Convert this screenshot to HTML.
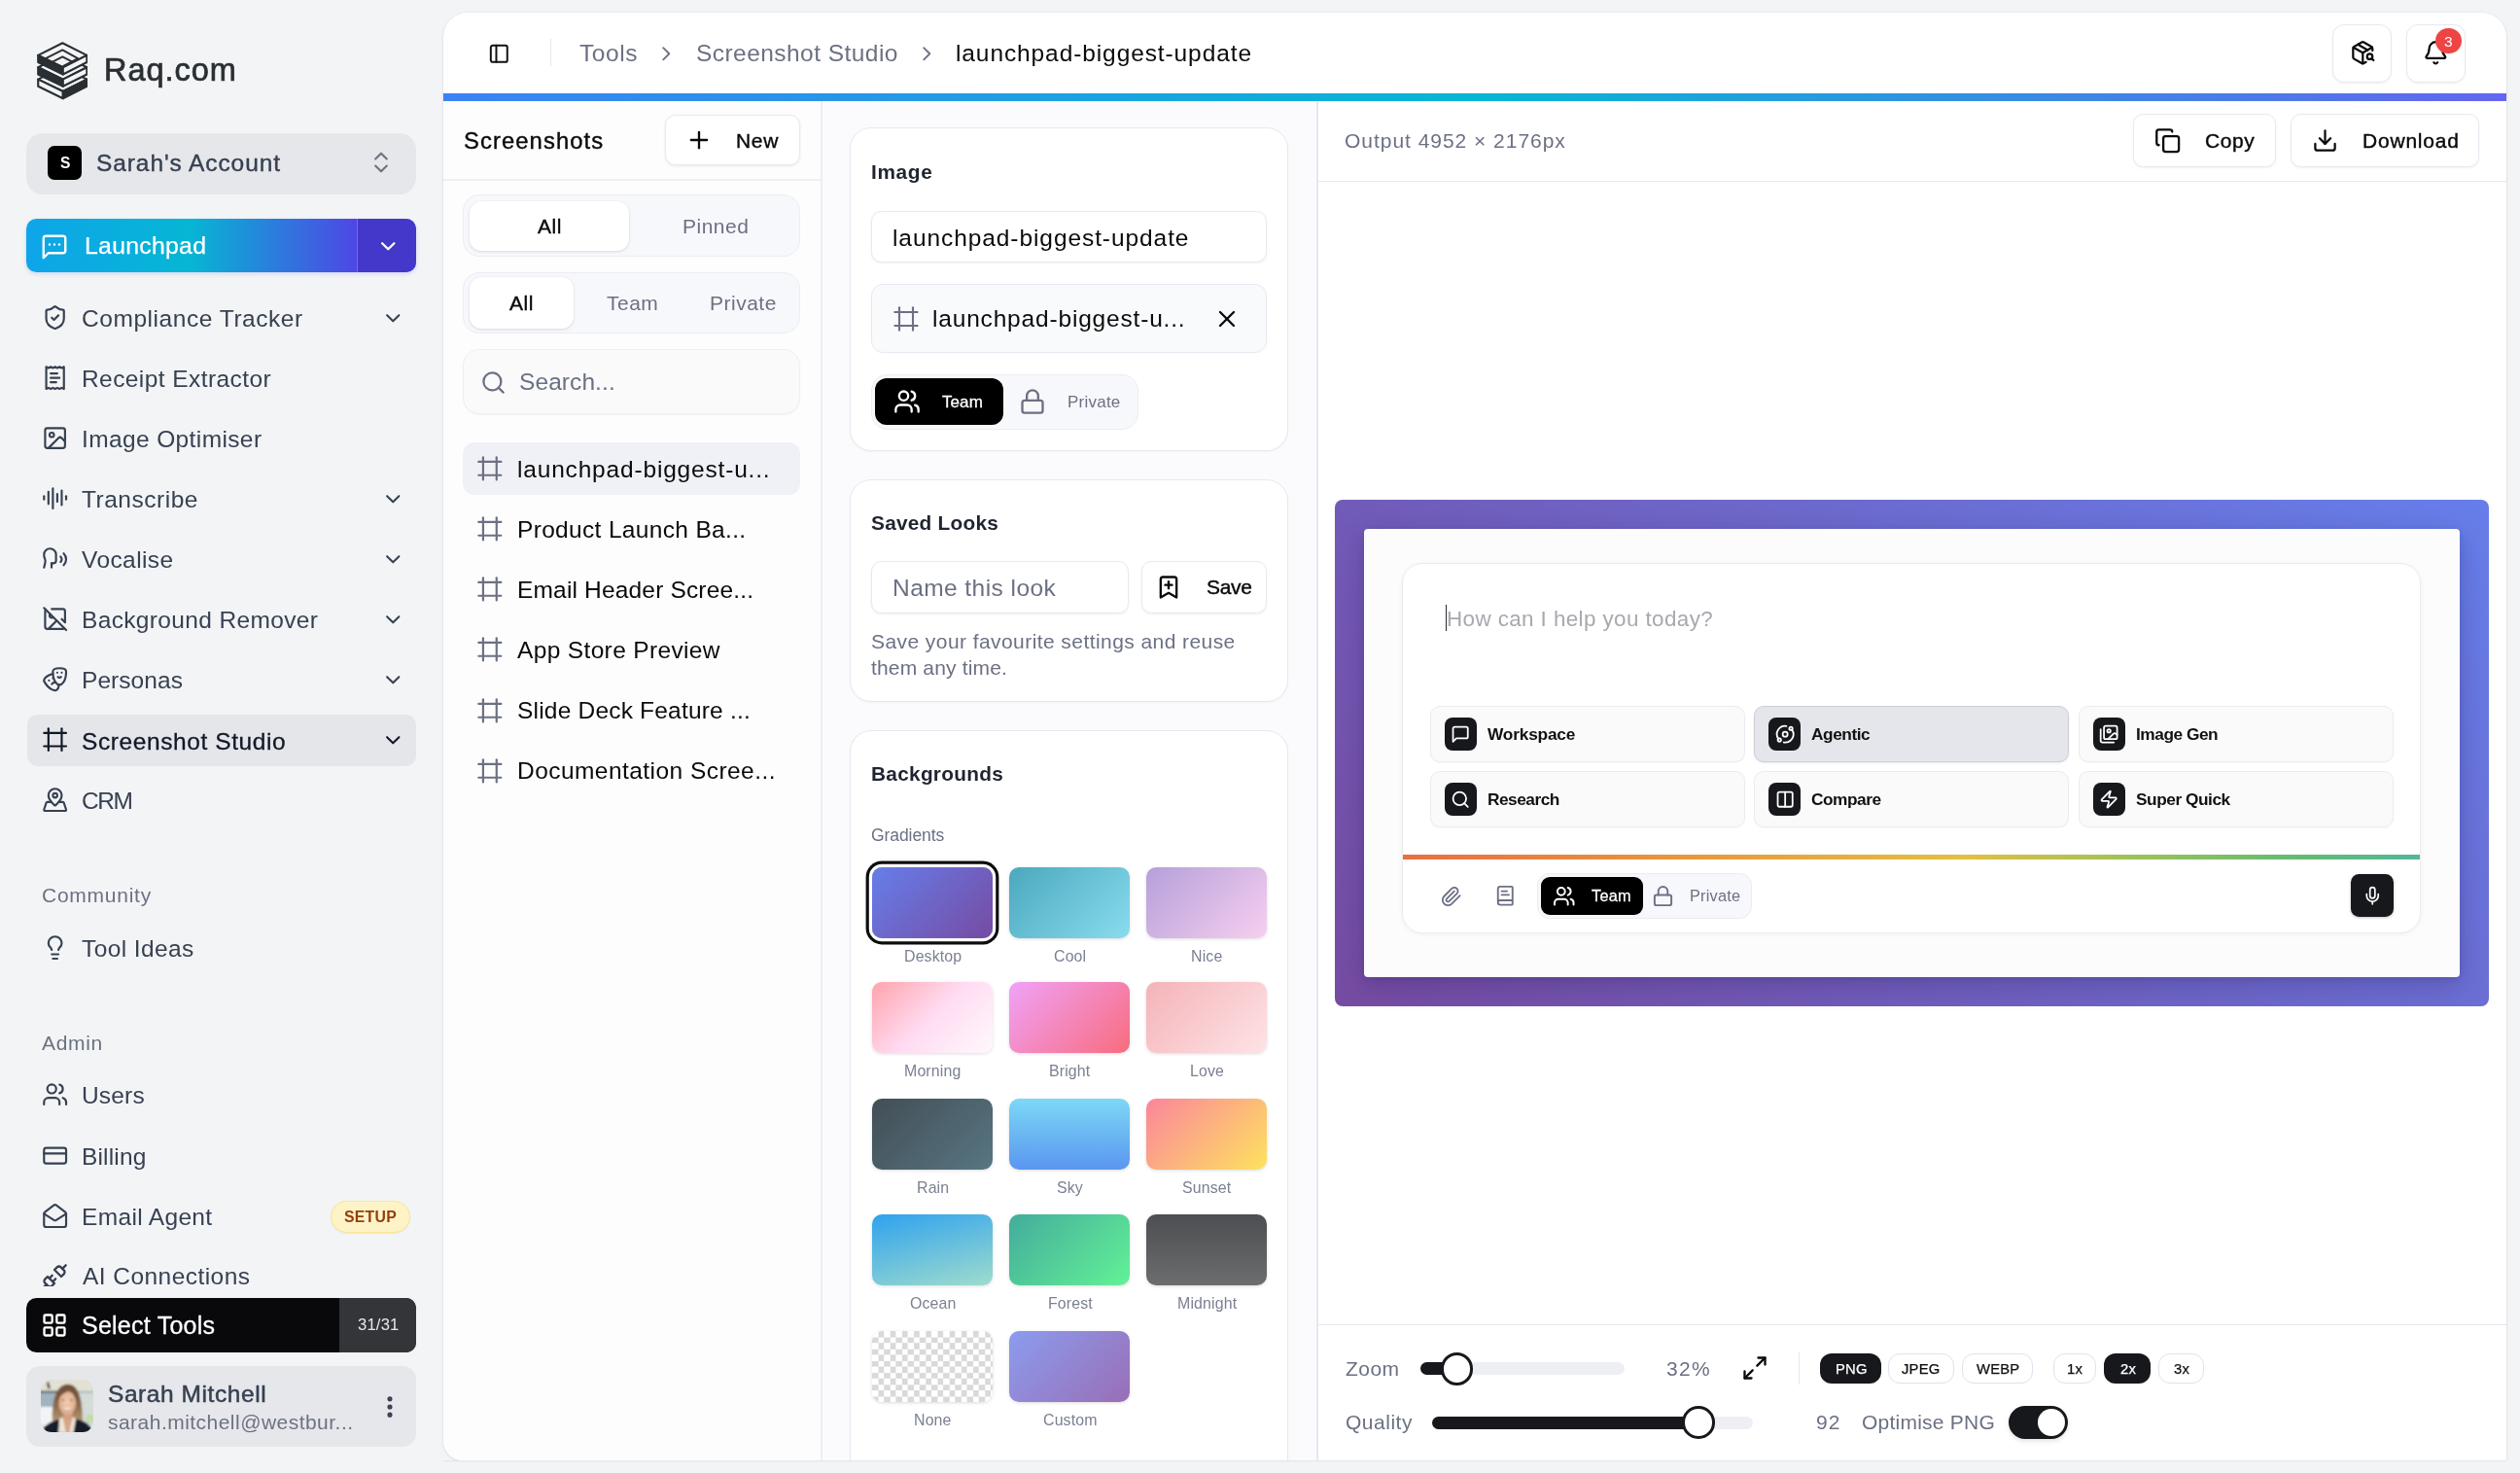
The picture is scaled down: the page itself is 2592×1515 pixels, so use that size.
<!DOCTYPE html>
<html lang="en"><head><meta charset="utf-8"><title>Screenshot Studio</title>
<style>
html,body{margin:0;padding:0;}
body{width:2592px;height:1515px;overflow:hidden;background:#f3f4f6;font-family:"Liberation Sans",sans-serif;position:relative;}
.a{position:absolute;box-sizing:border-box;}
.t{position:absolute;white-space:nowrap;will-change:transform;}
.ic{fill:none;stroke:currentColor;stroke-linecap:round;stroke-linejoin:round;overflow:visible;}
</style></head>
<body>
<svg width="0" height="0" style="position:absolute"><defs><g id="i-shield-check"><path d="M20 13c0 5-3.5 7.5-7.66 8.95a1 1 0 0 1-.67-.01C7.5 20.5 4 18 4 13V6a1 1 0 0 1 1-1c2 0 4.5-1.2 6.24-2.72a1.17 1.17 0 0 1 1.52 0C14.51 3.81 17 5 19 5a1 1 0 0 1 1 1z"/><path d="m9 12 2 2 4-4"/></g><g id="i-receipt-text"><path d="M4 2v20l2-1 2 1 2-1 2 1 2-1 2 1 2-1 2 1V2l-2 1-2-1-2 1-2-1-2 1-2-1-2 1Z"/><path d="M14 8H8"/><path d="M16 12H8"/><path d="M13 16H8"/></g><g id="i-image"><rect width="18" height="18" x="3" y="3" rx="2" ry="2"/><circle cx="9" cy="9" r="2"/><path d="m21 15-3.086-3.086a2 2 0 0 0-2.828 0L6 21"/></g><g id="i-audio-lines"><path d="M2 10v3"/><path d="M6 6v11"/><path d="M10 3v18"/><path d="M14 8v7"/><path d="M18 5v13"/><path d="M22 10v3"/></g><g id="i-speech"><path d="M8.8 20v-4.1l1.9.2a2.3 2.3 0 0 0 2.164-2.1V8.3A5.37 5.37 0 0 0 2 8.25c0 2.8.656 3.054 1 4.55a5.77 5.77 0 0 1 .029 2.758L2 20"/><path d="M19.8 17.8a7.5 7.5 0 0 0 .003-10.603"/><path d="M17 15a3.5 3.5 0 0 0-.025-4.975"/></g><g id="i-image-off"><line x1="2" x2="22" y1="2" y2="22"/><path d="M10.41 10.41a2 2 0 1 1-2.83-2.83"/><line x1="13.5" x2="6" y1="13.5" y2="21"/><line x1="18" x2="21" y1="12" y2="15"/><path d="M3.59 3.59A1.99 1.99 0 0 0 3 5v14a2 2 0 0 0 2 2h14c.55 0 1.052-.22 1.41-.59"/><path d="M21 15V5a2 2 0 0 0-2-2H9"/></g><g id="i-drama"><path d="M10 11h.01"/><path d="M14 6h.01"/><path d="M18 6h.01"/><path d="M6.5 13.1h.01"/><path d="M22 5c0 9-4 12-6 12s-6-3-6-12c0-2 2-3 6-3s6 1 6 3"/><path d="M17.4 9.9c-.8.8-2 .8-2.8 0"/><path d="M10.1 7.1C9 7.2 7.7 7.7 6 8.6c-3.5 2-4.7 3.9-3.7 5.6 4.5 7.8 9.5 8.4 11.2 7.4.9-.5 1.9-2.1 1.9-4.7"/><path d="M9.1 16.5c.3-1.1 1.4-1.7 2.4-1.4"/></g><g id="i-frame"><line x1="22" x2="2" y1="6" y2="6"/><line x1="22" x2="2" y1="18" y2="18"/><line x1="6" x2="6" y1="2" y2="22"/><line x1="18" x2="18" y1="2" y2="22"/></g><g id="i-map-pinned"><path d="M18 8c0 3.613-3.869 7.429-5.393 8.795a1 1 0 0 1-1.214 0C9.87 15.429 6 11.613 6 8a6 6 0 0 1 12 0"/><circle cx="12" cy="8" r="2"/><path d="M8.714 14h-3.71a1 1 0 0 0-.948.683l-2.004 6A1 1 0 0 0 3 22h18a1 1 0 0 0 .948-1.316l-2-6a1 1 0 0 0-.949-.684h-3.712"/></g><g id="i-lightbulb"><path d="M15 14c.2-1 .7-1.7 1.5-2.5 1-.9 1.5-2.2 1.5-3.5A6 6 0 0 0 6 8c0 1 .2 2.2 1.5 3.5.7.7 1.3 1.5 1.5 2.5"/><path d="M9 18h6"/><path d="M10 22h4"/></g><g id="i-users"><path d="M16 21v-2a4 4 0 0 0-4-4H6a4 4 0 0 0-4 4v2"/><circle cx="9" cy="7" r="4"/><path d="M22 21v-2a4 4 0 0 0-3-3.87"/><path d="M16 3.13a4 4 0 0 1 0 7.75"/></g><g id="i-credit-card"><rect width="20" height="14" x="2" y="5" rx="2"/><line x1="2" x2="22" y1="10" y2="10"/></g><g id="i-mail-open"><path d="M21.2 8.4c.5.38.8.97.8 1.6v10a2 2 0 0 1-2 2H4a2 2 0 0 1-2-2V10a2 2 0 0 1 .8-1.6l8-6a2 2 0 0 1 2.4 0l8 6Z"/><path d="m22 10-8.97 5.7a1.94 1.94 0 0 1-2.06 0L2 10"/></g><g id="i-unplug"><path d="m19 5 3-3"/><path d="m2 22 3-3"/><path d="M6.3 20.3a2.4 2.4 0 0 0 3.4 0L12 18l-6-6-2.3 2.3a2.4 2.4 0 0 0 0 3.4Z"/><path d="M7.5 13.5 10 11"/><path d="M10.5 16.5 13 14"/><path d="m12 6 6 6 2.3-2.3a2.4 2.4 0 0 0 0-3.4l-2.6-2.6a2.4 2.4 0 0 0-3.4 0Z"/></g><g id="i-layout-grid"><rect width="7" height="7" x="3" y="3" rx="1"/><rect width="7" height="7" x="14" y="3" rx="1"/><rect width="7" height="7" x="14" y="14" rx="1"/><rect width="7" height="7" x="3" y="14" rx="1"/></g><g id="i-ellipsis-vertical"><circle cx="12" cy="12" r="1"/><circle cx="12" cy="5" r="1"/><circle cx="12" cy="19" r="1"/></g><g id="i-chevron-down"><path d="m6 9 6 6 6-6"/></g><g id="i-chevron-right"><path d="m9 18 6-6-6-6"/></g><g id="i-chevrons-up-down"><path d="m7 15 5 5 5-5"/><path d="m7 9 5-5 5 5"/></g><g id="i-message-square-more"><path d="M21 15a2 2 0 0 1-2 2H7l-4 4V5a2 2 0 0 1 2-2h14a2 2 0 0 1 2 2z"/><path d="M8 10h.01"/><path d="M12 10h.01"/><path d="M16 10h.01"/></g><g id="i-message-square"><path d="M21 15a2 2 0 0 1-2 2H7l-4 4V5a2 2 0 0 1 2-2h14a2 2 0 0 1 2 2z"/></g><g id="i-panel-left"><rect width="18" height="18" x="3" y="3" rx="2"/><path d="M9 3v18"/></g><g id="i-package-search"><path d="M21 10V8a2 2 0 0 0-1-1.73l-7-4a2 2 0 0 0-2 0l-7 4A2 2 0 0 0 3 8v8a2 2 0 0 0 1 1.73l7 4a2 2 0 0 0 2 0l2-1.14"/><path d="m7.5 4.27 9 5.15"/><polyline points="3.29 7 12 12 20.71 7"/><line x1="12" x2="12" y1="22" y2="12"/><circle cx="18.5" cy="15.5" r="2.5"/><path d="M20.27 17.27 22 19"/></g><g id="i-bell"><path d="M10.268 21a2 2 0 0 0 3.464 0"/><path d="M3.262 15.326A1 1 0 0 0 4 17h16a1 1 0 0 0 .74-1.673C19.41 13.956 18 12.499 18 8A6 6 0 0 0 6 8c0 4.499-1.411 5.956-2.738 7.326"/></g><g id="i-plus"><path d="M5 12h14"/><path d="M12 5v14"/></g><g id="i-search"><circle cx="11" cy="11" r="8"/><path d="m21 21-4.3-4.3"/></g><g id="i-x"><path d="M18 6 6 18"/><path d="m6 6 12 12"/></g><g id="i-lock"><rect width="18" height="11" x="3" y="11" rx="2" ry="2"/><path d="M7 11V7a5 5 0 0 1 10 0v4"/></g><g id="i-bookmark-plus"><path d="m19 21-7-4-7 4V5a2 2 0 0 1 2-2h10a2 2 0 0 1 2 2v16z"/><line x1="12" x2="12" y1="7" y2="13"/><line x1="15" x2="9" y1="10" y2="10"/></g><g id="i-copy"><rect width="14" height="14" x="8" y="8" rx="2" ry="2"/><path d="M4 16c-1.1 0-2-.9-2-2V4c0-1.1.9-2 2-2h10c1.1 0 2 .9 2 2"/></g><g id="i-download"><path d="M21 15v4a2 2 0 0 1-2 2H5a2 2 0 0 1-2-2v-4"/><polyline points="7 10 12 15 17 10"/><line x1="12" x2="12" y1="15" y2="3"/></g><g id="i-maximize-2"><polyline points="15 3 21 3 21 9"/><polyline points="9 21 3 21 3 15"/><line x1="21" x2="14" y1="3" y2="10"/><line x1="3" x2="10" y1="21" y2="14"/></g><g id="i-orbit"><circle cx="12" cy="12" r="3"/><circle cx="19" cy="5" r="2"/><circle cx="5" cy="19" r="2"/><path d="M10.4 21.9a10 10 0 0 0 9.941-15.416"/><path d="M13.5 2.1a10 10 0 0 0-9.841 15.416"/></g><g id="i-images"><path d="M18 22H4a2 2 0 0 1-2-2V6"/><path d="m22 13-1.296-1.296a2.41 2.41 0 0 0-3.408 0L11 18"/><circle cx="12" cy="8" r="2"/><rect width="16" height="16" x="6" y="2" rx="2"/></g><g id="i-columns-2"><rect width="18" height="18" x="3" y="3" rx="2"/><path d="M12 3v18"/></g><g id="i-zap"><path d="M4 14a1 1 0 0 1-.78-1.63l9.9-10.2a.5.5 0 0 1 .86.46l-1.92 6.02A1 1 0 0 0 13 10h7a1 1 0 0 1 .78 1.63l-9.9 10.2a.5.5 0 0 1-.86-.46l1.92-6.02A1 1 0 0 0 11 14z"/></g><g id="i-paperclip"><path d="m21.44 11.05-9.19 9.19a6 6 0 0 1-8.49-8.49l8.57-8.57A4 4 0 1 1 18 8.84l-8.59 8.57a2 2 0 0 1-2.83-2.83l8.49-8.48"/></g><g id="i-book-text"><path d="M4 19.5v-15A2.5 2.5 0 0 1 6.5 2H19a1 1 0 0 1 1 1v18a1 1 0 0 1-1 1H6.5a1 1 0 0 1 0-5H20"/><path d="M8 11h8"/><path d="M8 7h6"/></g><g id="i-mic"><path d="M12 2a3 3 0 0 0-3 3v7a3 3 0 0 0 6 0V5a3 3 0 0 0-3-3Z"/><path d="M19 10v2a7 7 0 0 1-14 0v-2"/><line x1="12" x2="12" y1="19" y2="22"/></g></defs></svg>
<svg class="a" style="left:37.5px;top:42.5px;width:52.6px;height:60.2px" viewBox="130 120 1080 1215" preserveAspectRatio="none"><g stroke="#2a2f33" stroke-width="44" stroke-linejoin="round" stroke-linecap="round"><polygon points="155,900 670,645 1185,900 680,1150" fill="#f3f4f6"/><polygon points="155,900 680,1150 680,1295 155,1045" fill="#f3f4f6"/><polygon points="680,1150 1185,900 1185,1045 680,1295" fill="#2a2f33"/><polygon points="155,650 670,395 1185,650 680,900" fill="#f3f4f6"/><polygon points="155,650 680,900 680,1045 155,795" fill="#2a2f33"/><polygon points="680,900 1185,650 1185,795 680,1045" fill="#f3f4f6"/><polygon points="155,400 670,145 1185,400 680,650" fill="#f3f4f6"/><polygon points="155,400 680,650 680,795 155,545" fill="#2a2f33"/><polygon points="680,650 1185,400 1185,545 680,795" fill="#f3f4f6"/><polyline points="304,471 670,290 995,465 690,620" fill="none" stroke-width="40"/><polyline points="448,540 670,430 860,528" fill="none" stroke-width="40"/></g></svg>
<div class="t" style="left:107.2px;top:55.6px;font-size:32.5px;line-height:32.5px;color:#2a2f33;letter-spacing:0.96px;-webkit-text-stroke:0.7px #2a2f33;">Raq.com</div>
<div class="a" style="left:27.0px;top:137.0px;width:400.5px;height:62.5px;border-radius:17px;background:#e6e7eb;"></div>
<div class="a" style="left:49.4px;top:150.0px;width:34.6px;height:34.6px;border-radius:7px;background:#000;"></div>
<div class="t" style="left:61.5px;top:160.0px;font-size:15.6px;line-height:15.6px;color:#fff;font-weight:700;">S</div>
<div class="t" style="left:99.0px;top:156.0px;font-size:24.5px;line-height:24.5px;color:#374151;letter-spacing:0.91px;-webkit-text-stroke:0.4px #374151;">Sarah's Account</div>
<svg class="a ic" style="left:377.5px;top:153.3px;width:28px;height:28px;color:#6b7280;" viewBox="0 0 24 24" stroke-width="1.8"><use href="#i-chevrons-up-down"/></svg>
<div class="a" style="left:27.0px;top:225.0px;width:400.5px;height:55.0px;border-radius:10.5px;background:linear-gradient(90deg,#0ea5e9 0%,#06b6d4 42%,#4f46e5 85%,#4f46e5 100%);box-shadow:0 2px 4px rgba(50,70,190,.16);overflow:hidden;"><div class="a" style="left:340px;top:0;width:61px;height:55px;background:#4338ca;border-left:1.75px solid rgba(255,255,255,.28)"></div></div>
<svg class="a ic" style="left:40.7px;top:239.3px;width:30px;height:30px;color:#fff;" viewBox="0 0 24 24" stroke-width="1.9"><use href="#i-message-square-more"/></svg>
<div class="t" style="left:87.0px;top:241.3px;font-size:24.8px;line-height:24.8px;color:#fff;letter-spacing:0.28px;-webkit-text-stroke:0.25px #fff;">Launchpad</div>
<svg class="a ic" style="left:386.8px;top:240.8px;width:24.5px;height:24.5px;color:#fff;" viewBox="0 0 24 24" stroke-width="2.2"><use href="#i-chevron-down"/></svg>
<div class="a" style="left:27.5px;top:735.2px;width:400.0px;height:52.5px;border-radius:10.5px;background:#e5e6ea;"></div>
<svg class="a ic" style="left:42.8px;top:313.1px;width:27.3px;height:27.3px;color:#374151;" viewBox="0 0 24 24" stroke-width="1.9"><use href="#i-shield-check"/></svg>
<div class="t" style="left:84.3px;top:316.3px;font-size:24.5px;line-height:24.5px;color:#374151;letter-spacing:0.55px;">Compliance Tracker</div>
<svg class="a ic" style="left:392.1px;top:315.2px;width:24.5px;height:24.5px;color:#374151;" viewBox="0 0 24 24" stroke-width="2"><use href="#i-chevron-down"/></svg>
<svg class="a ic" style="left:42.8px;top:374.9px;width:27.3px;height:27.3px;color:#374151;" viewBox="0 0 24 24" stroke-width="1.9"><use href="#i-receipt-text"/></svg>
<div class="t" style="left:84.3px;top:378.1px;font-size:24.5px;line-height:24.5px;color:#374151;letter-spacing:0.42px;">Receipt Extractor</div>
<svg class="a ic" style="left:42.8px;top:436.8px;width:27.3px;height:27.3px;color:#374151;" viewBox="0 0 24 24" stroke-width="1.9"><use href="#i-image"/></svg>
<div class="t" style="left:84.3px;top:440.0px;font-size:24.5px;line-height:24.5px;color:#374151;letter-spacing:0.38px;">Image Optimiser</div>
<svg class="a ic" style="left:42.8px;top:498.8px;width:27.3px;height:27.3px;color:#374151;" viewBox="0 0 24 24" stroke-width="1.9"><use href="#i-audio-lines"/></svg>
<div class="t" style="left:84.3px;top:502.0px;font-size:24.5px;line-height:24.5px;color:#374151;letter-spacing:0.51px;">Transcribe</div>
<svg class="a ic" style="left:392.1px;top:501.0px;width:24.5px;height:24.5px;color:#374151;" viewBox="0 0 24 24" stroke-width="2"><use href="#i-chevron-down"/></svg>
<svg class="a ic" style="left:42.8px;top:560.6px;width:27.3px;height:27.3px;color:#374151;" viewBox="0 0 24 24" stroke-width="1.9"><use href="#i-speech"/></svg>
<div class="t" style="left:84.3px;top:563.8px;font-size:24.5px;line-height:24.5px;color:#374151;letter-spacing:0.41px;">Vocalise</div>
<svg class="a ic" style="left:392.1px;top:562.8px;width:24.5px;height:24.5px;color:#374151;" viewBox="0 0 24 24" stroke-width="2"><use href="#i-chevron-down"/></svg>
<svg class="a ic" style="left:42.8px;top:622.6px;width:27.3px;height:27.3px;color:#374151;" viewBox="0 0 24 24" stroke-width="1.9"><use href="#i-image-off"/></svg>
<div class="t" style="left:84.3px;top:625.8px;font-size:24.5px;line-height:24.5px;color:#374151;letter-spacing:0.35px;">Background Remover</div>
<svg class="a ic" style="left:392.1px;top:624.8px;width:24.5px;height:24.5px;color:#374151;" viewBox="0 0 24 24" stroke-width="2"><use href="#i-chevron-down"/></svg>
<svg class="a ic" style="left:42.8px;top:684.9px;width:27.3px;height:27.3px;color:#374151;" viewBox="0 0 24 24" stroke-width="1.9"><use href="#i-drama"/></svg>
<div class="t" style="left:84.3px;top:688.1px;font-size:24.5px;line-height:24.5px;color:#374151;letter-spacing:0.06px;">Personas</div>
<svg class="a ic" style="left:392.1px;top:687.0px;width:24.5px;height:24.5px;color:#374151;" viewBox="0 0 24 24" stroke-width="2"><use href="#i-chevron-down"/></svg>
<svg class="a ic" style="left:42.8px;top:747.0px;width:27.3px;height:27.3px;color:#111827;" viewBox="0 0 24 24" stroke-width="1.9"><use href="#i-frame"/></svg>
<div class="t" style="left:84.3px;top:750.6px;font-size:24.5px;line-height:24.5px;color:#111827;letter-spacing:0.59px;-webkit-text-stroke:0.3px #111827;">Screenshot Studio</div>
<svg class="a ic" style="left:392.1px;top:749.1px;width:24.5px;height:24.5px;color:#111827;" viewBox="0 0 24 24" stroke-width="2"><use href="#i-chevron-down"/></svg>
<svg class="a ic" style="left:42.8px;top:809.1px;width:27.3px;height:27.3px;color:#374151;" viewBox="0 0 24 24" stroke-width="1.9"><use href="#i-map-pinned"/></svg>
<div class="t" style="left:84.3px;top:812.3px;font-size:24.5px;line-height:24.5px;color:#374151;letter-spacing:-1.50px;">CRM</div>
<svg class="a ic" style="left:42.8px;top:960.6px;width:27.3px;height:27.3px;color:#374151;" viewBox="0 0 24 24" stroke-width="1.9"><use href="#i-lightbulb"/></svg>
<div class="t" style="left:84.3px;top:963.8px;font-size:24.5px;line-height:24.5px;color:#374151;letter-spacing:0.40px;">Tool Ideas</div>
<svg class="a ic" style="left:42.8px;top:1112.0px;width:27.3px;height:27.3px;color:#374151;" viewBox="0 0 24 24" stroke-width="1.9"><use href="#i-users"/></svg>
<div class="t" style="left:84.3px;top:1115.3px;font-size:24.5px;line-height:24.5px;color:#374151;letter-spacing:0.18px;">Users</div>
<svg class="a ic" style="left:42.8px;top:1174.8px;width:27.3px;height:27.3px;color:#374151;" viewBox="0 0 24 24" stroke-width="1.9"><use href="#i-credit-card"/></svg>
<div class="t" style="left:84.3px;top:1178.1px;font-size:24.5px;line-height:24.5px;color:#374151;letter-spacing:0.16px;">Billing</div>
<svg class="a ic" style="left:42.8px;top:1237.0px;width:27.3px;height:27.3px;color:#374151;" viewBox="0 0 24 24" stroke-width="1.9"><use href="#i-mail-open"/></svg>
<div class="t" style="left:84.3px;top:1240.3px;font-size:24.5px;line-height:24.5px;color:#374151;letter-spacing:0.34px;">Email Agent</div>
<div class="t" style="left:42.6px;top:910.4px;font-size:21px;line-height:21px;color:#6b7280;letter-spacing:0.75px;">Community</div>
<div class="t" style="left:42.6px;top:1062.0px;font-size:21px;line-height:21px;color:#6b7280;letter-spacing:0.67px;">Admin</div>
<div class="a" style="left:339.7px;top:1234.5px;width:82.5px;height:33.6px;border-radius:17px;background:#fef3c7;border:1.75px solid #fde68a;box-shadow:0 1px 2px rgba(0,0,0,.05);"></div>
<div class="t" style="left:354.3px;top:1243.8px;font-size:15.8px;line-height:15.8px;color:#92400e;font-weight:700;letter-spacing:0.25px;">SETUP</div>
<div class="a" style="left:0;top:1290px;width:440px;height:32.8px;overflow:hidden">
<svg class="a ic" style="left:42px;top:8.5px;width:28px;height:28px;color:#374151" viewBox="0 0 24 24" stroke-width="2"><use href="#i-unplug"/></svg>
</div>
<div class="t" style="left:84.5px;top:1300.5px;font-size:24.5px;line-height:24.5px;color:#374151;letter-spacing:0.45px;">AI Connections</div>
<div class="a" style="left:27.0px;top:1335.0px;width:400.5px;height:55.5px;border-radius:10.5px;background:#09090b;overflow:hidden;"><div class="a" style="left:322px;top:0;width:79px;height:56px;background:#333539"></div></div>
<svg class="a ic" style="left:41.7px;top:1348.7px;width:28px;height:28px;color:#fff;" viewBox="0 0 24 24" stroke-width="2"><use href="#i-layout-grid"/></svg>
<div class="t" style="left:84.0px;top:1350.5px;font-size:25px;line-height:25px;color:#fff;letter-spacing:0.24px;-webkit-text-stroke:0.3px #fff;">Select Tools</div>
<div class="t" style="left:367.5px;top:1355.1px;font-size:16.6px;line-height:16.6px;color:#e5e7eb;letter-spacing:0.2px;">31/31</div>
<div class="a" style="left:27.0px;top:1404.5px;width:400.5px;height:83.0px;border-radius:14px;background:#e6e7eb;"></div>
<svg class="a" style="left:42px;top:1419px;width:54px;height:54px;border-radius:11px" viewBox="0 0 54 54">
<defs><filter id="avb" x="-10%" y="-10%" width="120%" height="120%"><feGaussianBlur stdDeviation="1.0"/></filter>
<linearGradient id="avh" x1="0" y1="0" x2="0" y2="1"><stop offset="0" stop-color="#6b4c35"/><stop offset=".55" stop-color="#8a6a4b"/><stop offset="1" stop-color="#b59673"/></linearGradient>
<radialGradient id="avf" cx=".5" cy=".45" r=".6"><stop offset="0" stop-color="#f3cdb3"/><stop offset="1" stop-color="#dba688"/></radialGradient></defs>
<rect width="54" height="54" fill="#dfe3df"/>
<g filter="url(#avb)">
<rect x="-2" y="-2" width="58" height="15" fill="#e3e0d4"/>
<rect x="-2" y="12.500" width="20" height="16" fill="#9fb4be"/>
<rect x="-2" y="11.500" width="20" height="2.200" fill="#5d6a6c"/>
<rect x="-2" y="28" width="20" height="18" fill="#f1f4f7"/>
<rect x="36" y="11" width="20" height="36" fill="#d4dcd8"/>
<rect x="38" y="12" width="16" height="1.600" fill="#aab6b0"/>
<ellipse cx="50.500" cy="40" rx="4" ry="4.500" fill="#c2dba8"/>
<rect x="6.500" y="2.500" width="2.600" height="7" rx="1" fill="#45433f" transform="rotate(-14 8 6)"/>
<path d="M12 43C11 30 13 5 27.500 4.800C42 5 42.500 28 43 42C40 43 37 42 36 40L19 40C18 42 15 43 12 43z" fill="url(#avh)"/>
<path d="M23 34h9.500v10h-9.500z" fill="#d2a080"/>
<ellipse cx="27.300" cy="24.200" rx="8.900" ry="12.200" fill="url(#avf)"/>
<path d="M17.500 22C17 12 21 8.500 27.500 8.500S38 12 37.200 22C35.500 16 32 12.500 29 12C25 12.500 19.500 16 17.500 22z" fill="#74533a"/>
<ellipse cx="22.800" cy="21" rx="1.800" ry=".8" fill="#6b4a3a" opacity=".75"/><ellipse cx="31.300" cy="21" rx="1.800" ry=".8" fill="#6b4a3a" opacity=".75"/>
<path d="M22.800 28.800C25 31.800 29.500 31.800 31.800 28.800C30 32.600 24.600 32.600 22.800 28.800z" fill="#c27f74"/>
<path d="M23.600 29.200C25.500 30.800 29 30.800 31 29.200C29.500 30 25 30 23.600 29.200z" fill="#fff" stroke="#fff" stroke-width=".7"/>
<path d="M2 56C2 47 9 43.500 19 40.500L24 56zM52.500 56C53 46 46 43 36 40.200L30 56z" fill="#141a2b"/>
<path d="M19 40.500L22.500 38.500L26 54.500L18 55zM36 40.200L32.800 38.300L29.500 54.500L33.500 55z" fill="#efe5d8"/>
<path d="M23.200 41L32 41L29.200 55L25.800 55z" fill="#d7a686"/>
</g></svg>
<div class="t" style="left:111.3px;top:1421.5px;font-size:24.5px;line-height:24.5px;color:#374151;letter-spacing:0.57px;-webkit-text-stroke:0.5px #374151;">Sarah Mitchell</div>
<div class="t" style="left:111.0px;top:1451.7px;font-size:21px;line-height:21px;color:#6b7280;letter-spacing:0.47px;">sarah.mitchell@westbur...</div>
<svg class="a ic" style="left:386.6px;top:1432.5px;width:28px;height:28px;color:#374151;" viewBox="0 0 24 24" stroke-width="2.4"><use href="#i-ellipsis-vertical"/></svg>
<div class="a" style="left:456px;top:13px;width:2122px;height:1489px;background:#fff;border-radius:25px 25px 0 20px;box-shadow:0 1px 3px rgba(0,0,0,.10),0 0 0 1px rgba(0,0,0,.02);overflow:hidden">
<div class="a" style="left:0;top:90px;width:389px;height:1400px;background:#fdfdfe"></div>
<div class="a" style="left:389px;top:90px;width:510px;height:1400px;background:#fbfbfd"></div>
</div>
<svg class="a ic" style="left:502.3px;top:43.5px;width:22.6px;height:22.6px;color:#111;" viewBox="0 0 24 24" stroke-width="2.1"><use href="#i-panel-left"/></svg>
<div class="a" style="left:565.5px;top:40.0px;width:1.8px;height:27.5px;background:#e5e7eb;"></div>
<div class="t" style="left:596.0px;top:42.8px;font-size:24.5px;line-height:24.5px;color:#6c7084;letter-spacing:0.55px;">Tools</div>
<svg class="a ic" style="left:673.2px;top:42.8px;width:24.5px;height:24.5px;color:#6c7084;" viewBox="0 0 24 24" stroke-width="1.8"><use href="#i-chevron-right"/></svg>
<div class="t" style="left:715.6px;top:42.8px;font-size:24.5px;line-height:24.5px;color:#6c7084;letter-spacing:0.45px;">Screenshot Studio</div>
<svg class="a ic" style="left:941.2px;top:42.8px;width:24.5px;height:24.5px;color:#6c7084;" viewBox="0 0 24 24" stroke-width="1.8"><use href="#i-chevron-right"/></svg>
<div class="t" style="left:983.0px;top:42.8px;font-size:24.5px;line-height:24.5px;color:#0a0a0a;letter-spacing:0.90px;">launchpad-biggest-update</div>
<div class="a" style="left:2399.0px;top:24.8px;width:61.0px;height:60.0px;border-radius:12px;border:1.75px solid #e8e9f0;background:#fff;box-shadow:0 1px 2.5px rgba(0,0,0,.06);"></div>
<svg class="a ic" style="left:2416.5px;top:40.7px;width:26.6px;height:26.6px;color:#0a0a0a;" viewBox="0 0 24 24" stroke-width="2"><use href="#i-package-search"/></svg>
<div class="a" style="left:2475.0px;top:24.8px;width:60.5px;height:60.0px;border-radius:12px;border:1.75px solid #e8e9f0;background:#fff;box-shadow:0 1px 2.5px rgba(0,0,0,.06);"></div>
<svg class="a ic" style="left:2491.9px;top:40.7px;width:26.6px;height:26.6px;color:#0a0a0a;" viewBox="0 0 24 24" stroke-width="2"><use href="#i-bell"/></svg>
<div class="a" style="left:2505.2px;top:28.9px;width:26.4px;height:26.4px;border-radius:50%;background:#ef4444;"></div>
<div class="t" style="left:2514.0px;top:34.7px;font-size:15.5px;line-height:15.5px;color:#fff;">3</div>
<div class="a" style="left:456.0px;top:95.5px;width:2122.0px;height:8.0px;background:linear-gradient(90deg,#3b82f6 0%,#06b6d4 50%,#6366f1 100%);"></div>
<div class="a" style="left:843.8px;top:103.5px;width:1.8px;height:1398.5px;background:#eceef3;"></div>
<div class="a" style="left:1354.3px;top:103.5px;width:1.8px;height:1398.5px;background:#e6e7ee;"></div>
<div class="a" style="left:456.0px;top:183.8px;width:388.0px;height:1.8px;background:#eef0f4;"></div>
<div class="t" style="left:476.5px;top:132.6px;font-size:23.8px;line-height:23.8px;color:#0a0a0a;letter-spacing:1.09px;-webkit-text-stroke:0.4px #0a0a0a;">Screenshots</div>
<div class="a" style="left:683.5px;top:117.8px;width:139.0px;height:52.4px;border-radius:10.5px;border:1.75px solid #e8e9f0;background:#fff;box-shadow:0 1px 3px rgba(0,0,0,.08);"></div>
<svg class="a ic" style="left:705.0px;top:130.0px;width:28px;height:28px;color:#0a0a0a;" viewBox="0 0 24 24" stroke-width="2"><use href="#i-plus"/></svg>
<div class="t" style="left:757.0px;top:133.9px;font-size:21px;line-height:21px;color:#0a0a0a;letter-spacing:0.69px;-webkit-text-stroke:0.4px #0a0a0a;">New</div>
<div class="a" style="left:476.4px;top:200.0px;width:346.6px;height:64.4px;border-radius:17px;background:#f7f8fb;border:1.75px solid #ecedf2;"></div>
<div class="a" style="left:482.5px;top:206.5px;width:164.5px;height:51.8px;border-radius:12px;background:#fff;box-shadow:0 1px 3px rgba(0,0,0,.12),0 0 1px rgba(0,0,0,.08);"></div>
<div class="t" style="left:553.1px;top:221.9px;font-size:21px;line-height:21px;color:#0a0a0a;-webkit-text-stroke:0.4px #0a0a0a;letter-spacing:0.5px;">All</div>
<div class="t" style="left:701.9px;top:221.9px;font-size:21px;line-height:21px;color:#6c7084;letter-spacing:0.5px;">Pinned</div>
<div class="a" style="left:476.4px;top:279.6px;width:346.6px;height:63.2px;border-radius:17px;background:#f7f8fb;border:1.75px solid #ecedf2;"></div>
<div class="a" style="left:482.5px;top:285.0px;width:107.5px;height:52.5px;border-radius:12px;background:#fff;box-shadow:0 1px 3px rgba(0,0,0,.12),0 0 1px rgba(0,0,0,.08);"></div>
<div class="t" style="left:524.3px;top:300.5px;font-size:21px;line-height:21px;color:#0a0a0a;-webkit-text-stroke:0.4px #0a0a0a;letter-spacing:0.5px;">All</div>
<div class="t" style="left:623.9px;top:300.5px;font-size:21px;line-height:21px;color:#6c7084;letter-spacing:0.5px;">Team</div>
<div class="t" style="left:730.3px;top:300.5px;font-size:21px;line-height:21px;color:#6c7084;letter-spacing:0.5px;">Private</div>
<div class="a" style="left:476.4px;top:359.0px;width:346.6px;height:67.2px;border-radius:17px;background:#fafafb;border:1.75px solid #eeeff3;box-shadow:0 1px 2px rgba(0,0,0,.04);"></div>
<svg class="a ic" style="left:493.7px;top:379.5px;width:27px;height:27px;color:#6c7084;" viewBox="0 0 24 24" stroke-width="2"><use href="#i-search"/></svg>
<div class="t" style="left:533.8px;top:381.3px;font-size:24.5px;line-height:24.5px;color:#6c7084;letter-spacing:0.08px;">Search...</div>
<div class="a" style="left:475.8px;top:455.0px;width:347.5px;height:54.4px;border-radius:12px;background:#f0f1f6;"></div>
<svg class="a ic" style="left:490.2px;top:467.9px;width:27.7px;height:27.7px;color:#6c7084;" viewBox="0 0 24 24" stroke-width="1.9"><use href="#i-frame"/></svg>
<div class="t" style="left:532.0px;top:470.6px;font-size:24.5px;line-height:24.5px;color:#0a0a0a;letter-spacing:0.82px;">launchpad-biggest-u...</div>
<svg class="a ic" style="left:490.2px;top:530.1px;width:27.7px;height:27.7px;color:#6c7084;" viewBox="0 0 24 24" stroke-width="1.9"><use href="#i-frame"/></svg>
<div class="t" style="left:532.0px;top:532.8px;font-size:24.5px;line-height:24.5px;color:#0a0a0a;letter-spacing:0.33px;">Product Launch Ba...</div>
<svg class="a ic" style="left:490.2px;top:592.2px;width:27.7px;height:27.7px;color:#6c7084;" viewBox="0 0 24 24" stroke-width="1.9"><use href="#i-frame"/></svg>
<div class="t" style="left:532.0px;top:594.9px;font-size:24.5px;line-height:24.5px;color:#0a0a0a;letter-spacing:0.17px;">Email Header Scree...</div>
<svg class="a ic" style="left:490.2px;top:654.4px;width:27.7px;height:27.7px;color:#6c7084;" viewBox="0 0 24 24" stroke-width="1.9"><use href="#i-frame"/></svg>
<div class="t" style="left:532.0px;top:657.1px;font-size:24.5px;line-height:24.5px;color:#0a0a0a;letter-spacing:0.35px;">App Store Preview</div>
<svg class="a ic" style="left:490.2px;top:716.6px;width:27.7px;height:27.7px;color:#6c7084;" viewBox="0 0 24 24" stroke-width="1.9"><use href="#i-frame"/></svg>
<div class="t" style="left:532.0px;top:719.2px;font-size:24.5px;line-height:24.5px;color:#0a0a0a;letter-spacing:0.20px;">Slide Deck Feature ...</div>
<svg class="a ic" style="left:490.2px;top:778.7px;width:27.7px;height:27.7px;color:#6c7084;" viewBox="0 0 24 24" stroke-width="1.9"><use href="#i-frame"/></svg>
<div class="t" style="left:532.0px;top:781.4px;font-size:24.5px;line-height:24.5px;color:#0a0a0a;letter-spacing:0.45px;">Documentation Scree...</div>
<div class="a" style="left:873.8px;top:131.2px;width:451.6px;height:333.2px;border-radius:22px;border:1.75px solid #e8e9f0;background:#fff;box-shadow:0 1px 2px rgba(0,0,0,.04);"></div>
<div class="t" style="left:895.8px;top:166.5px;font-size:20.8px;line-height:20.8px;color:#1f2430;letter-spacing:0.67px;font-weight:700;">Image</div>
<div class="a" style="left:895.8px;top:217.2px;width:407.0px;height:52.6px;border-radius:10.5px;border:1.75px solid #e8e9f0;background:#fff;box-shadow:0 1px 2.5px rgba(0,0,0,.06);"></div>
<div class="t" style="left:917.5px;top:233.0px;font-size:24.5px;line-height:24.5px;color:#0a0a0a;letter-spacing:0.92px;">launchpad-biggest-update</div>
<div class="a" style="left:895.8px;top:292.2px;width:407.0px;height:70.8px;border-radius:12px;border:1.75px solid #e8e9f0;background:#f9fafc;"></div>
<svg class="a ic" style="left:917.7px;top:313.7px;width:28px;height:28px;color:#6c7084;" viewBox="0 0 24 24" stroke-width="1.8"><use href="#i-frame"/></svg>
<div class="t" style="left:959.4px;top:315.7px;font-size:24.5px;line-height:24.5px;color:#0a0a0a;letter-spacing:0.82px;">launchpad-biggest-u...</div>
<svg class="a ic" style="left:1247.8px;top:313.7px;width:28px;height:28px;color:#0a0a0a;" viewBox="0 0 24 24" stroke-width="2"><use href="#i-x"/></svg>
<div class="a" style="left:896.3px;top:385.4px;width:274.7px;height:57.0px;border-radius:17px;background:#f7f8fb;border:1.75px solid #ecedf2;"></div>
<div class="a" style="left:899.8px;top:389.0px;width:132.2px;height:47.8px;border-radius:12px;background:#000;"></div>
<svg class="a ic" style="left:919.0px;top:399.0px;width:28px;height:28px;color:#fff;" viewBox="0 0 24 24" stroke-width="2"><use href="#i-users"/></svg>
<div class="t" style="left:969.2px;top:404.9px;font-size:17px;line-height:17px;color:#fff;letter-spacing:0.08px;-webkit-text-stroke:0.3px #fff;">Team</div>
<svg class="a ic" style="left:1048.4px;top:399.0px;width:28px;height:28px;color:#6c7084;" viewBox="0 0 24 24" stroke-width="2"><use href="#i-lock"/></svg>
<div class="t" style="left:1097.6px;top:404.9px;font-size:17px;line-height:17px;color:#6c7084;letter-spacing:0.23px;">Private</div>
<div class="a" style="left:873.8px;top:493.0px;width:451.6px;height:228.8px;border-radius:22px;border:1.75px solid #e8e9f0;background:#fff;box-shadow:0 1px 2px rgba(0,0,0,.04);"></div>
<div class="t" style="left:895.6px;top:527.6px;font-size:20.8px;line-height:20.8px;color:#1f2430;letter-spacing:0.26px;font-weight:700;">Saved Looks</div>
<div class="a" style="left:896.2px;top:577.2px;width:265.3px;height:53.6px;border-radius:10.5px;border:1.75px solid #e8e9f0;background:#fff;box-shadow:0 1px 2.5px rgba(0,0,0,.06);"></div>
<div class="t" style="left:917.9px;top:593.0px;font-size:24.5px;line-height:24.5px;color:#6c7084;letter-spacing:0.44px;">Name this look</div>
<div class="a" style="left:1173.7px;top:577.2px;width:129.2px;height:53.6px;border-radius:10.5px;border:1.75px solid #e8e9f0;background:#fff;box-shadow:0 1px 2.5px rgba(0,0,0,.06);"></div>
<svg class="a ic" style="left:1188.0px;top:590.0px;width:28px;height:28px;color:#0a0a0a;" viewBox="0 0 24 24" stroke-width="2"><use href="#i-bookmark-plus"/></svg>
<div class="t" style="left:1241.0px;top:592.7px;font-size:21px;line-height:21px;color:#0a0a0a;letter-spacing:-0.29px;-webkit-text-stroke:0.4px #0a0a0a;">Save</div>
<div class="t" style="left:895.6px;top:648.7px;font-size:21px;line-height:21px;color:#6c7084;letter-spacing:0.43px;">Save your favourite settings and reuse</div>
<div class="t" style="left:895.6px;top:675.9px;font-size:21px;line-height:21px;color:#6c7084;letter-spacing:0.17px;">them any time.</div>
<div class="a" style="left:873.8px;top:751.0px;width:451.6px;height:751.0px;border-radius:22px;border:1.75px solid #e8e9f0;background:#fff;box-shadow:0 1px 2px rgba(0,0,0,.04);border-bottom:none;border-radius:22px 22px 0 0;"></div>
<div class="t" style="left:895.6px;top:785.7px;font-size:20.8px;line-height:20.8px;color:#1f2430;letter-spacing:0.29px;font-weight:700;">Backgrounds</div>
<div class="t" style="left:895.6px;top:851.0px;font-size:17.5px;line-height:17.5px;color:#6c7084;letter-spacing:-0.08px;">Gradients</div>
<div class="a" style="left:897.0px;top:891.8px;width:124.0px;height:73.0px;border-radius:10px;background:linear-gradient(135deg,#667eea,#764ba2);box-shadow:0 0 0 3.2px #fff,0 0 0 6.4px #0d0d10;"></div>
<div class="t" style="left:929.8px;top:976.2px;font-size:15.9px;line-height:15.9px;color:#7b8093;letter-spacing:0.15px;">Desktop</div>
<div class="a" style="left:1038.0px;top:891.8px;width:124.0px;height:73.0px;border-radius:10px;background:linear-gradient(135deg,#4ba8be,#89dcee);box-shadow:0 1px 3.5px rgba(0,0,0,.14);"></div>
<div class="t" style="left:1083.6px;top:976.2px;font-size:15.9px;line-height:15.9px;color:#7b8093;letter-spacing:0.15px;">Cool</div>
<div class="a" style="left:1179.0px;top:891.8px;width:124.0px;height:73.0px;border-radius:10px;background:linear-gradient(135deg,#b5a0da,#f7cfef);box-shadow:0 1px 3.5px rgba(0,0,0,.14);"></div>
<div class="t" style="left:1225.1px;top:976.2px;font-size:15.9px;line-height:15.9px;color:#7b8093;letter-spacing:0.15px;">Nice</div>
<div class="a" style="left:897.0px;top:1009.9px;width:124.0px;height:73.0px;border-radius:10px;background:linear-gradient(135deg,#ffa3ac 0%,#ffdcf2 50%,#fff8fc 100%);box-shadow:0 1px 3.5px rgba(0,0,0,.14);"></div>
<div class="t" style="left:930.3px;top:1094.3px;font-size:15.9px;line-height:15.9px;color:#7b8093;letter-spacing:0.15px;">Morning</div>
<div class="a" style="left:1038.0px;top:1009.9px;width:124.0px;height:73.0px;border-radius:10px;background:linear-gradient(135deg,#f0a2f8,#f86c7e);box-shadow:0 1px 3.5px rgba(0,0,0,.14);"></div>
<div class="t" style="left:1079.2px;top:1094.3px;font-size:15.9px;line-height:15.9px;color:#7b8093;letter-spacing:0.15px;">Bright</div>
<div class="a" style="left:1179.0px;top:1009.9px;width:124.0px;height:73.0px;border-radius:10px;background:linear-gradient(135deg,#f4b3b8,#fee3e6);box-shadow:0 1px 3.5px rgba(0,0,0,.14);"></div>
<div class="t" style="left:1223.8px;top:1094.3px;font-size:15.9px;line-height:15.9px;color:#7b8093;letter-spacing:0.15px;">Love</div>
<div class="a" style="left:897.0px;top:1130.0px;width:124.0px;height:73.0px;border-radius:10px;background:linear-gradient(135deg,#424e56,#587682);box-shadow:0 1px 3.5px rgba(0,0,0,.14);"></div>
<div class="t" style="left:942.6px;top:1214.4px;font-size:15.9px;line-height:15.9px;color:#7b8093;letter-spacing:0.15px;">Rain</div>
<div class="a" style="left:1038.0px;top:1130.0px;width:124.0px;height:73.0px;border-radius:10px;background:linear-gradient(180deg,#7dd8f6,#5a96f0);box-shadow:0 1px 3.5px rgba(0,0,0,.14);"></div>
<div class="t" style="left:1086.7px;top:1214.4px;font-size:15.9px;line-height:15.9px;color:#7b8093;letter-spacing:0.15px;">Sky</div>
<div class="a" style="left:1179.0px;top:1130.0px;width:124.0px;height:73.0px;border-radius:10px;background:linear-gradient(135deg,#fa859c,#fee25e);box-shadow:0 1px 3.5px rgba(0,0,0,.14);"></div>
<div class="t" style="left:1216.2px;top:1214.4px;font-size:15.9px;line-height:15.9px;color:#7b8093;letter-spacing:0.15px;">Sunset</div>
<div class="a" style="left:897.0px;top:1248.8px;width:124.0px;height:73.0px;border-radius:10px;background:linear-gradient(165deg,#2fa2ee,#9fdccd);box-shadow:0 1px 3.5px rgba(0,0,0,.14);"></div>
<div class="t" style="left:935.6px;top:1333.2px;font-size:15.9px;line-height:15.9px;color:#7b8093;letter-spacing:0.15px;">Ocean</div>
<div class="a" style="left:1038.0px;top:1248.8px;width:124.0px;height:73.0px;border-radius:10px;background:linear-gradient(135deg,#43ac9c,#62f296);box-shadow:0 1px 3.5px rgba(0,0,0,.14);"></div>
<div class="t" style="left:1077.5px;top:1333.2px;font-size:15.9px;line-height:15.9px;color:#7b8093;letter-spacing:0.15px;">Forest</div>
<div class="a" style="left:1179.0px;top:1248.8px;width:124.0px;height:73.0px;border-radius:10px;background:linear-gradient(180deg,#4d4e51,#6c6d6f);box-shadow:0 1px 3.5px rgba(0,0,0,.14);"></div>
<div class="t" style="left:1211.0px;top:1333.2px;font-size:15.9px;line-height:15.9px;color:#7b8093;letter-spacing:0.15px;">Midnight</div>
<div class="a" style="left:897.0px;top:1368.7px;width:124.0px;height:73.0px;border-radius:10px;background:conic-gradient(#d9d9d9 25%,#fff 0 50%,#d9d9d9 0 75%,#fff 0) 0 0/12.2px 12.2px;box-shadow:0 1px 3.5px rgba(0,0,0,.14);"></div>
<div class="t" style="left:940.0px;top:1453.1px;font-size:15.9px;line-height:15.9px;color:#7b8093;letter-spacing:0.15px;">None</div>
<div class="a" style="left:1038.0px;top:1368.7px;width:124.0px;height:73.0px;border-radius:10px;background:linear-gradient(135deg,#8b9cee,#9a6eb6);box-shadow:0 1px 3.5px rgba(0,0,0,.14);"></div>
<div class="t" style="left:1072.6px;top:1453.1px;font-size:15.9px;line-height:15.9px;color:#7b8093;letter-spacing:0.15px;">Custom</div>
<div class="a" style="left:456.0px;top:1502.0px;width:2130.0px;height:13.0px;background:#f3f4f6;"></div>
<div class="a" style="left:456.0px;top:1502.0px;width:2122.0px;height:2.0px;background:linear-gradient(180deg,rgba(0,0,0,.07),rgba(0,0,0,0));"></div>
<div class="t" style="left:1383.0px;top:134.3px;font-size:21px;line-height:21px;color:#6c7084;letter-spacing:0.97px;">Output 4952 × 2176px</div>
<div class="a" style="left:2193.5px;top:116.8px;width:147.2px;height:55.3px;border-radius:10.5px;border:1.75px solid #e8e9f0;background:#fff;box-shadow:0 1px 2.5px rgba(0,0,0,.06);"></div>
<svg class="a ic" style="left:2215.9px;top:130.5px;width:27.4px;height:27.4px;color:#0a0a0a;" viewBox="0 0 24 24" stroke-width="2"><use href="#i-copy"/></svg>
<div class="t" style="left:2268.0px;top:134.1px;font-size:21px;line-height:21px;color:#0a0a0a;letter-spacing:0.56px;-webkit-text-stroke:0.4px #0a0a0a;">Copy</div>
<div class="a" style="left:2355.5px;top:116.8px;width:194.0px;height:55.3px;border-radius:10.5px;border:1.75px solid #e8e9f0;background:#fff;box-shadow:0 1px 2.5px rgba(0,0,0,.06);"></div>
<svg class="a ic" style="left:2377.8px;top:130.7px;width:27px;height:27px;color:#0a0a0a;" viewBox="0 0 24 24" stroke-width="2"><use href="#i-download"/></svg>
<div class="t" style="left:2429.5px;top:134.1px;font-size:21px;line-height:21px;color:#0a0a0a;letter-spacing:0.79px;-webkit-text-stroke:0.4px #0a0a0a;">Download</div>
<div class="a" style="left:1356.0px;top:185.6px;width:1222.0px;height:1.8px;background:#e8e9f0;"></div>
<div class="a" style="left:1372.5px;top:513.6px;width:1187.5px;height:521.4px;border-radius:8px;background:linear-gradient(225deg,#667eea 0%,#764ba2 100%);"></div>
<div class="a" style="left:1403.0px;top:544.0px;width:1127.0px;height:460.5px;border-radius:4px;background:#fcfcfd;box-shadow:0 8px 28px rgba(20,10,60,.20),0 2px 6px rgba(20,10,60,.10);"></div>
<div class="a" style="left:1441.8px;top:579.4px;width:1048.4px;height:380.3px;border-radius:21px;border:1.5px solid #ececee;background:#fff;box-shadow:0 1px 5px rgba(0,0,0,.05);overflow:hidden;"><div class="a" style="left:-1px;top:298.4px;width:1050px;height:5.4px;background:linear-gradient(90deg,#e86f42 0%,#e89a3c 30%,#e2bf42 55%,#9cc258 72%,#62ba74 88%,#55b69a 100%)"></div></div>
<div class="a" style="left:1486.6px;top:621.5px;width:1.6px;height:27.5px;background:#2a2a2e;"></div>
<div class="t" style="left:1488.2px;top:625.6px;font-size:22.4px;line-height:22.4px;color:#a7a9af;letter-spacing:0.41px;">How can I help you today?</div>
<div class="a" style="left:1471.0px;top:725.8px;width:324.0px;height:58.4px;border-radius:10px;background:#fafafb;border:1.5px solid #ececf0;box-shadow:0 1px 1.5px rgba(0,0,0,.03);"></div>
<div class="a" style="left:1486.0px;top:738.2px;width:33.0px;height:33.6px;border-radius:8px;background:#17181c;"></div>
<svg class="a ic" style="left:1492.3px;top:744.9px;width:20.3px;height:20.3px;color:#fff;" viewBox="0 0 24 24" stroke-width="2.1"><use href="#i-message-square"/></svg>
<div class="t" style="left:1530.0px;top:746.8px;font-size:17.3px;line-height:17.3px;color:#111;letter-spacing:-0.19px;font-weight:700;">Workspace</div>
<div class="a" style="left:1804.4px;top:725.8px;width:324.0px;height:58.4px;border-radius:10px;background:#e5e6ec;border:1.5px solid #cdcfd7;box-shadow:0 1px 2px rgba(0,0,0,.08);"></div>
<div class="a" style="left:1819.4px;top:738.2px;width:33.0px;height:33.6px;border-radius:8px;background:#17181c;"></div>
<svg class="a ic" style="left:1825.8px;top:744.9px;width:20.3px;height:20.3px;color:#fff;" viewBox="0 0 24 24" stroke-width="2.1"><use href="#i-orbit"/></svg>
<div class="t" style="left:1863.4px;top:746.8px;font-size:17.3px;line-height:17.3px;color:#111;letter-spacing:-0.44px;font-weight:700;">Agentic</div>
<div class="a" style="left:2138.0px;top:725.8px;width:324.0px;height:58.4px;border-radius:10px;background:#fafafb;border:1.5px solid #ececf0;box-shadow:0 1px 1.5px rgba(0,0,0,.03);"></div>
<div class="a" style="left:2153.0px;top:738.2px;width:33.0px;height:33.6px;border-radius:8px;background:#17181c;"></div>
<svg class="a ic" style="left:2159.3px;top:744.9px;width:20.3px;height:20.3px;color:#fff;" viewBox="0 0 24 24" stroke-width="2.1"><use href="#i-images"/></svg>
<div class="t" style="left:2197.0px;top:746.8px;font-size:17.3px;line-height:17.3px;color:#111;letter-spacing:-0.46px;font-weight:700;">Image Gen</div>
<div class="a" style="left:1471.0px;top:792.6px;width:324.0px;height:58.4px;border-radius:10px;background:#fafafb;border:1.5px solid #ececf0;box-shadow:0 1px 1.5px rgba(0,0,0,.03);"></div>
<div class="a" style="left:1486.0px;top:805.0px;width:33.0px;height:33.6px;border-radius:8px;background:#17181c;"></div>
<svg class="a ic" style="left:1492.3px;top:811.8px;width:20.3px;height:20.3px;color:#fff;" viewBox="0 0 24 24" stroke-width="2.1"><use href="#i-search"/></svg>
<div class="t" style="left:1530.0px;top:813.6px;font-size:17.3px;line-height:17.3px;color:#111;letter-spacing:-0.49px;font-weight:700;">Research</div>
<div class="a" style="left:1804.4px;top:792.6px;width:324.0px;height:58.4px;border-radius:10px;background:#fafafb;border:1.5px solid #ececf0;box-shadow:0 1px 1.5px rgba(0,0,0,.03);"></div>
<div class="a" style="left:1819.4px;top:805.0px;width:33.0px;height:33.6px;border-radius:8px;background:#17181c;"></div>
<svg class="a ic" style="left:1825.8px;top:811.8px;width:20.3px;height:20.3px;color:#fff;" viewBox="0 0 24 24" stroke-width="2.1"><use href="#i-columns-2"/></svg>
<div class="t" style="left:1863.4px;top:813.6px;font-size:17.3px;line-height:17.3px;color:#111;letter-spacing:-0.46px;font-weight:700;">Compare</div>
<div class="a" style="left:2138.0px;top:792.6px;width:324.0px;height:58.4px;border-radius:10px;background:#fafafb;border:1.5px solid #ececf0;box-shadow:0 1px 1.5px rgba(0,0,0,.03);"></div>
<div class="a" style="left:2153.0px;top:805.0px;width:33.0px;height:33.6px;border-radius:8px;background:#17181c;"></div>
<svg class="a ic" style="left:2159.3px;top:811.8px;width:20.3px;height:20.3px;color:#fff;" viewBox="0 0 24 24" stroke-width="2.1"><use href="#i-zap"/></svg>
<div class="t" style="left:2197.0px;top:813.6px;font-size:17.3px;line-height:17.3px;color:#111;letter-spacing:-0.46px;font-weight:700;">Super Quick</div>
<svg class="a ic" style="left:1482.0px;top:910.6px;width:22px;height:22px;color:#6c7084;" viewBox="0 0 24 24" stroke-width="2"><use href="#i-paperclip"/></svg>
<svg class="a ic" style="left:1536.8px;top:910.4px;width:22.5px;height:22.5px;color:#6c7084;" viewBox="0 0 24 24" stroke-width="2"><use href="#i-book-text"/></svg>
<div class="a" style="left:1581.3px;top:898.2px;width:220.6px;height:46.4px;border-radius:12.5px;background:#f7f8fb;border:1.5px solid #ececf0;"></div>
<div class="a" style="left:1585.0px;top:902.2px;width:104.8px;height:38.8px;border-radius:9px;background:#000;"></div>
<svg class="a ic" style="left:1596.8px;top:909.5px;width:23.5px;height:23.5px;color:#fff;" viewBox="0 0 24 24" stroke-width="2"><use href="#i-users"/></svg>
<div class="t" style="left:1636.8px;top:913.4px;font-size:16.3px;line-height:16.3px;color:#fff;letter-spacing:0.28px;-webkit-text-stroke:0.3px #fff;">Team</div>
<svg class="a ic" style="left:1699.0px;top:909.5px;width:23px;height:23px;color:#6c7084;" viewBox="0 0 24 24" stroke-width="2"><use href="#i-lock"/></svg>
<div class="t" style="left:1738.4px;top:913.4px;font-size:16.3px;line-height:16.3px;color:#6c7084;letter-spacing:0.23px;">Private</div>
<div class="a" style="left:2418.3px;top:899.4px;width:44.2px;height:43.8px;border-radius:8.5px;background:#17181c;box-shadow:0 1px 3px rgba(0,0,0,.25);"></div>
<svg class="a ic" style="left:2430.2px;top:911.0px;width:20.5px;height:20.5px;color:#fff;" viewBox="0 0 24 24" stroke-width="2"><use href="#i-mic"/></svg>
<div class="a" style="left:1356.0px;top:1361.6px;width:1222.0px;height:1.8px;background:#e5e6ee;"></div>
<div class="t" style="left:1383.5px;top:1396.6px;font-size:21px;line-height:21px;color:#6c7084;letter-spacing:0.44px;">Zoom</div>
<div class="a" style="left:1461.0px;top:1401.3px;width:209.6px;height:13.0px;border-radius:6.5px;background:#eeeff5;"></div>
<div class="a" style="left:1461.0px;top:1401.3px;width:40.0px;height:13.0px;border-radius:6.5px;background:#17181c;"></div>
<div class="a" style="left:1481.8px;top:1391.0px;width:33.6px;height:33.6px;border-radius:50%;background:#fff;border:3.5px solid #17181c;"></div>
<div class="t" style="left:1713.7px;top:1396.6px;font-size:21px;line-height:21px;color:#6c7084;letter-spacing:1.28px;">32%</div>
<svg class="a ic" style="left:1790.7px;top:1393.0px;width:28px;height:28px;color:#0a0a0a;" viewBox="0 0 24 24" stroke-width="2"><use href="#i-maximize-2"/></svg>
<div class="a" style="left:1849.6px;top:1391.0px;width:1.8px;height:33.3px;background:#e5e6ee;"></div>
<div class="a" style="left:1872.0px;top:1392.2px;width:63.0px;height:31.0px;border-radius:12px;background:#17181c;"></div>
<div class="t" style="left:1887.5px;top:1400.6px;font-size:14.8px;line-height:14.8px;color:#fff;-webkit-text-stroke:0.25px #fff;letter-spacing:0.2px;">PNG</div>
<div class="a" style="left:1941.5px;top:1392.2px;width:68.0px;height:31.0px;border-radius:12px;background:#fff;border:1.75px solid #e1e2eb;"></div>
<div class="t" style="left:1956.2px;top:1400.6px;font-size:14.8px;line-height:14.8px;color:#111;-webkit-text-stroke:0.25px #111;letter-spacing:0.2px;">JPEG</div>
<div class="a" style="left:2018.0px;top:1392.2px;width:72.7px;height:31.0px;border-radius:12px;background:#fff;border:1.75px solid #e1e2eb;"></div>
<div class="t" style="left:2032.6px;top:1400.6px;font-size:14.8px;line-height:14.8px;color:#111;-webkit-text-stroke:0.25px #111;letter-spacing:0.2px;">WEBP</div>
<div class="a" style="left:2112.0px;top:1392.2px;width:44.3px;height:31.0px;border-radius:12px;background:#fff;border:1.75px solid #e1e2eb;"></div>
<div class="t" style="left:2126.3px;top:1400.6px;font-size:14.8px;line-height:14.8px;color:#111;-webkit-text-stroke:0.25px #111;letter-spacing:0.2px;">1x</div>
<div class="a" style="left:2164.4px;top:1392.2px;width:48.0px;height:31.0px;border-radius:12px;background:#17181c;"></div>
<div class="t" style="left:2180.6px;top:1400.6px;font-size:14.8px;line-height:14.8px;color:#fff;-webkit-text-stroke:0.25px #fff;letter-spacing:0.2px;">2x</div>
<div class="a" style="left:2220.0px;top:1392.2px;width:47.3px;height:31.0px;border-radius:12px;background:#fff;border:1.75px solid #e1e2eb;"></div>
<div class="t" style="left:2235.8px;top:1400.6px;font-size:14.8px;line-height:14.8px;color:#111;-webkit-text-stroke:0.25px #111;letter-spacing:0.2px;">3x</div>
<div class="t" style="left:1383.5px;top:1451.8px;font-size:21px;line-height:21px;color:#6c7084;letter-spacing:0.51px;">Quality</div>
<div class="a" style="left:1473.3px;top:1456.5px;width:329.4px;height:13.0px;border-radius:6.5px;background:#eeeff5;"></div>
<div class="a" style="left:1473.3px;top:1456.5px;width:276.0px;height:13.0px;border-radius:6.5px;background:#17181c;"></div>
<div class="a" style="left:1730.4px;top:1446.2px;width:33.6px;height:33.6px;border-radius:50%;background:#fff;border:3.5px solid #17181c;"></div>
<div class="t" style="left:1867.6px;top:1451.8px;font-size:21px;line-height:21px;color:#6c7084;letter-spacing:1.04px;">92</div>
<div class="t" style="left:1914.6px;top:1451.8px;font-size:21px;line-height:21px;color:#6c7084;letter-spacing:0.23px;">Optimise PNG</div>
<div class="a" style="left:2066.0px;top:1446.0px;width:60.8px;height:33.8px;border-radius:17px;background:#17181c;box-shadow:0 2px 5px rgba(0,0,0,.12);"></div>
<div class="a" style="left:2095.5px;top:1449.0px;width:28.0px;height:28.0px;border-radius:50%;background:#fff;"></div>
</body></html>
